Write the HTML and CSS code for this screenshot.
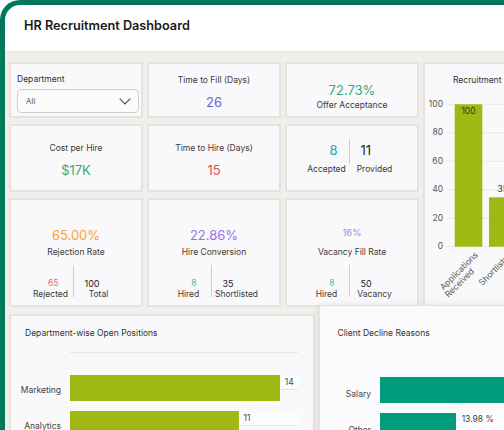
FILE: index.html
```html
<!DOCTYPE html>
<html lang="en">
<head>
<meta charset="utf-8">
<title>HR Recruitment Dashboard</title>
<link rel="stylesheet" href="styles.css">
</head>
<body>
<div class="frame">
  <div class="panel">
    <header class="topbar">
      <h1 class="title">HR Recruitment Dashboard</h1>
    </header>

    <main class="board">
      <section class="grid">
        <div class="card filter">
          <span class="filter-label">Department</span>
          <div class="select">
            <span>All</span>
            <svg class="chevron" width="12" height="7" viewBox="0 0 12 7"><polyline points="0.7,0.7 6,6 11.3,0.7" fill="none" stroke="#555" stroke-width="1.2"/></svg>
          </div>
        </div>

        <div class="card kpi">
          <div class="kpi-label">Time to Fill (Days)</div>
          <div class="kpi-value c-indigo">26</div>
        </div>

        <div class="card kpi kpi--stacked">
          <div class="kpi-value c-green">72.73%</div>
          <div class="kpi-label">Offer Acceptance</div>
        </div>

        <div class="card chart-card">
          <svg class="chart" width="150" height="241" viewBox="0 0 150 241">
            <text class="chart-name" x="28" y="19.3">Recruitment</text>
            <g class="grid-lines">
              <line x1="22" x2="150" y1="40.3" y2="40.3"/>
              <line x1="22" x2="150" y1="68.8" y2="68.8"/>
              <line x1="22" x2="150" y1="97.3" y2="97.3"/>
              <line x1="22" x2="150" y1="125.8" y2="125.8"/>
              <line x1="22" x2="150" y1="154.2" y2="154.2"/>
              <line x1="22" x2="150" y1="182.7" y2="182.7"/>
            </g>
            <g class="y-ticks">
              <text x="18" y="43.1">100</text>
              <text x="18" y="71.1">80</text>
              <text x="18" y="100.1">60</text>
              <text x="18" y="128.1">40</text>
              <text x="18" y="156.8">20</text>
              <text x="18" y="185.1">0</text>
            </g>
            <rect class="bar" x="29.7" y="40.3" width="27.6" height="142.4"/>
            <rect class="bar" x="64" y="133.3" width="27.6" height="49.4"/>
            <text class="bar-value" x="43.5" y="49.8">100</text>
            <text class="bar-value" x="77.8" y="128.2">35</text>
            <g class="x-ticks">
              <text transform="translate(53.5 191.5) rotate(-45)">Applications</text>
              <text transform="translate(49.6 207.9) rotate(-45)">Received</text>
              <text transform="translate(87.8 191.5) rotate(-45)">Shortlisted</text>
            </g>
          </svg>
        </div>

        <div class="card kpi">
          <div class="kpi-label">Cost per Hire</div>
          <div class="kpi-value c-green">$17K</div>
        </div>

        <div class="card kpi">
          <div class="kpi-label">Time to Hire (Days)</div>
          <div class="kpi-value c-red">15</div>
        </div>

        <div class="card split-card">
          <div class="split">
            <div class="split-side split-side--left">
              <div class="split-num split-num--big c-blue">8</div>
              <div class="split-text">Accepted</div>
            </div>
            <div class="split-rule split-rule--short"></div>
            <div class="split-side split-side--right">
              <div class="split-num split-num--big">11</div>
              <div class="split-text">Provided</div>
            </div>
          </div>
        </div>

        <div class="card kpi-split">
          <div class="kpi-value c-orange">65.00%</div>
          <div class="kpi-label kpi-label--gap">Rejection Rate</div>
          <div class="split split--bottom">
            <div class="split-side split-side--left">
              <div class="split-num c-rose">65</div>
              <div class="split-text">Rejected</div>
            </div>
            <div class="split-rule"></div>
            <div class="split-side split-side--right">
              <div class="split-num split-num--dark">100</div>
              <div class="split-text">Total</div>
            </div>
          </div>
        </div>

        <div class="card kpi-split">
          <div class="kpi-value c-violet">22.86%</div>
          <div class="kpi-label kpi-label--gap">Hire Conversion</div>
          <div class="split split--bottom">
            <div class="split-side split-side--left">
              <div class="split-num c-mint">8</div>
              <div class="split-text">Hired</div>
            </div>
            <div class="split-rule"></div>
            <div class="split-side split-side--right">
              <div class="split-num split-num--dark">35</div>
              <div class="split-text">Shortlisted</div>
            </div>
          </div>
        </div>

        <div class="card kpi-split">
          <div class="kpi-value kpi-value--small c-lilac">16%</div>
          <div class="kpi-label kpi-label--wide">Vacancy Fill Rate</div>
          <div class="split split--bottom">
            <div class="split-side split-side--left">
              <div class="split-num c-mint">8</div>
              <div class="split-text">Hired</div>
            </div>
            <div class="split-rule"></div>
            <div class="split-side split-side--right">
              <div class="split-num split-num--dark">50</div>
              <div class="split-text">Vacancy</div>
            </div>
          </div>
        </div>
      </section>

      <section class="bottom">
        <div class="card dept-card">
          <div class="chart-title">Department-wise Open Positions</div>
          <div class="hchart hchart--dept">
            <div class="hchart-axis"></div>
            <div class="hrow">
              <div class="hrow-label">Marketing</div>
              <div class="hrow-track">
                <div class="hbar hbar--olive" style="width:210.3px"></div>
                <div class="hval hval--ruled">14</div>
              </div>
            </div>
            <div class="hrow">
              <div class="hrow-label">Analytics</div>
              <div class="hrow-track">
                <div class="hbar hbar--olive" style="width:169px"></div>
                <div class="hval hval--ruled">11</div>
              </div>
            </div>
          </div>
        </div>

        <div class="card decline-card">
          <div class="chart-title">Client Decline Reasons</div>
          <div class="hchart hchart--decline">
            <div class="hrow">
              <div class="hrow-label">Salary</div>
              <div class="hrow-track">
                <div class="hbar hbar--teal" style="width:150px"></div>
              </div>
            </div>
            <div class="hrow">
              <div class="hrow-label">Other</div>
              <div class="hrow-track">
                <div class="hbar hbar--teal" style="width:75.6px"></div>
                <div class="hval hval--tag">13.98 %</div>
              </div>
            </div>
          </div>
        </div>
      </section>
    </main>
  </div>
</div>
</body>
</html>
```

FILE: styles.css
```css
* {
  box-sizing: border-box;
}

html,
body {
  margin: 0;
}

body {
  width: 504px;
  height: 430px;
  overflow: hidden;
  background: #ffffff;
  font-family: Inter, "Noto Sans", "Liberation Sans", sans-serif;
  color: #363636;
}

/* green window frame around the app */
.frame {
  width: 600px;
  height: 480px;
  padding: 5px 0 0 5px;
  background: #00785a;
  border-top-left-radius: 20px;
}

.panel {
  height: 100%;
  background: #ffffff;
  border-top-left-radius: 15px;
  overflow: hidden;
}

.topbar {
  height: 48px;
  padding: 12px 0 0 19px;
  border-bottom: 2px solid #ebebeb;
}

.title {
  margin: 0;
  font-size: 12.7px;
  font-weight: 600;
  line-height: 18px;
  color: #1b1b1b;
}

.board {
  height: 100%;
  padding: 9px 0 0 4px;
  background: #f1efeb;
}

/* KPI grid */
.grid {
  display: grid;
  grid-template-columns: 134px 134px 134px 150px;
  grid-template-rows: 56px 68px 109px;
  column-gap: 4px;
  row-gap: 6px;
}

.card {
  background: #f9f8fa;
  border: 2px solid #e6e3de;
  border-radius: 2px;
}

/* department filter */
.filter {
  padding: 10px 0 0 6px;
}

.filter-label {
  display: block;
  font-size: 8.5px;
  line-height: 11px;
  color: #333;
}

.select {
  display: flex;
  align-items: center;
  justify-content: space-between;
  width: 122px;
  height: 24px;
  margin-top: 4px;
  padding: 0 7px 0 8px;
  border: 1px solid #cfcfcf;
  border-radius: 4px;
  background: #fbfbfc;
  font-size: 8px;
  color: #666;
}

.chevron {
  display: block;
}

/* single value cards */
.kpi {
  display: flex;
  flex-direction: column;
  align-items: center;
  justify-content: center;
  gap: 8px;
  padding-top: 5px;
}

.kpi--stacked {
  justify-content: flex-start;
  gap: 1px;
  padding-top: 18px;
}

.kpi-label {
  font-size: 8.5px;
  line-height: 11px;
  color: #3b3b3b;
  white-space: nowrap;
}

.kpi-label--gap {
  margin-top: 3px;
}

.kpi-label--wide {
  margin-top: 8px;
}

.kpi-value {
  font-size: 13px;
  line-height: 17px;
}

.kpi-value--small {
  font-size: 9.5px;
  line-height: 12px;
}

.c-indigo { color: #6a5fd6; }
.c-green { color: #3aab77; }
.c-red { color: #e4504f; }
.c-orange { color: #f6a530; }
.c-violet { color: #9474e8; }
.c-blue { color: #2b9ec6; }
.c-rose { color: #e56a6a; }
.c-mint { color: #4cbf86; }
.c-lilac { color: #a586ee; }

/* cards with a two-sided breakdown */
.split-card {
  display: flex;
  align-items: center;
  justify-content: center;
}

.kpi-split {
  display: flex;
  flex-direction: column;
  align-items: center;
  padding-top: 26.5px;
}

.split {
  display: flex;
  align-items: flex-start;
}

.split--bottom {
  align-items: flex-end;
  margin-top: 7.5px;
}

.split-side--left {
  width: 44px;
}

.split-side--right {
  width: 50px;
}

.split-num {
  font-size: 8.5px;
  line-height: 11px;
}

.split-side--left .split-num {
  text-align: right;
  padding-right: 14px;
}

.split-side--right .split-num {
  text-align: left;
  padding-left: 11px;
}

.split-num--big {
  font-size: 13px;
  line-height: 17px;
  margin-bottom: 5px;
  color: #1e1e1e;
}

.split-side--left .split-num--big {
  padding-right: 11px;
}

.split-num--big.c-blue {
  color: #2b9ec6;
}

.split-num--dark {
  font-size: 9px;
  color: #222;
}

.split-text {
  text-align: center;
  font-size: 8.5px;
  line-height: 11px;
  color: #3b3b3b;
  white-space: nowrap;
}

.split-rule {
  width: 1px;
  height: 32px;
  margin-bottom: 3px;
  background: #cdcdcd;
}

.split-rule--short {
  height: 25px;
  margin: -2.5px 0 0;
}

/* vertical bar chart */
.chart-card {
  grid-column: 4;
  grid-row: 1 / span 3;
  overflow: hidden;
}

.chart {
  display: block;
  font-family: Inter, "Noto Sans", sans-serif;
  font-size: 8.5px;
}

.chart-name {
  fill: #333;
}

.grid-lines line {
  stroke: #e8e8e8;
  stroke-width: 1;
}

.y-ticks text {
  fill: #555;
  text-anchor: end;
}

.bar {
  fill: #9fb813;
}

.bar-value {
  fill: #333;
  text-anchor: middle;
}

.x-ticks text {
  fill: #555;
  text-anchor: end;
}

/* bottom row */
.bottom {
  display: flex;
  align-items: flex-start;
  gap: 4px;
  margin-top: 7px;
}

.chart-title {
  font-size: 8.5px;
  line-height: 12px;
  color: #333;
  white-space: nowrap;
}

.dept-card {
  width: 306px;
  height: 200px;
  padding: 11px 0 0 14px;
}

.decline-card {
  position: relative;
  z-index: 1;
  width: 220px;
  height: 160px;
  margin-top: -9px;
  padding: 20.5px 0 0 17.5px;
  background: #fbfafc;
  border: 1px solid #e2e2e4;
  box-shadow: 0 1px 8px rgba(0, 0, 0, 0.1);
}

/* horizontal bar charts */
.hchart--dept {
  margin-left: -14px;
}

.hchart--decline {
  margin: 38px 0 0 -17.5px;
}

.hchart-axis {
  width: 228px;
  margin: 13px 0 21.7px 58.5px;
  border-top: 1px solid #e6e6e6;
}

.hrow {
  display: flex;
  align-items: flex-start;
  height: 26px;
  margin-bottom: 10px;
}

.hrow-label {
  width: 50px;
  margin-right: 8.5px;
  padding-top: 10px;
  text-align: right;
  font-size: 8.5px;
  line-height: 11px;
  color: #444;
}

.hchart--decline .hrow-label {
  width: 51.7px;
  margin-right: 9px;
  padding-top: 12px;
}

.hrow-track {
  display: flex;
  align-items: flex-start;
  width: 228px;
}

.hchart--decline .hrow-track {
  width: 160px;
}

.hbar {
  flex: none;
  height: 26px;
}

.hbar--olive {
  background: #9fb813;
}

.hbar--teal {
  background: #009c7b;
}

.hval {
  font-size: 8.5px;
  line-height: 13px;
  color: #444;
  white-space: nowrap;
}

.hval--ruled {
  flex: 1;
  height: 14px;
  margin: 1px 0 0 1px;
  padding-left: 4px;
  background: #fcfcfd;
  border-bottom: 1px solid #e6e6e6;
}

.hval--tag {
  flex: 1;
  height: 17px;
  margin: 0.5px 0 0 4px;
  padding-left: 2px;
  background: #fdfdfe;
}
```
